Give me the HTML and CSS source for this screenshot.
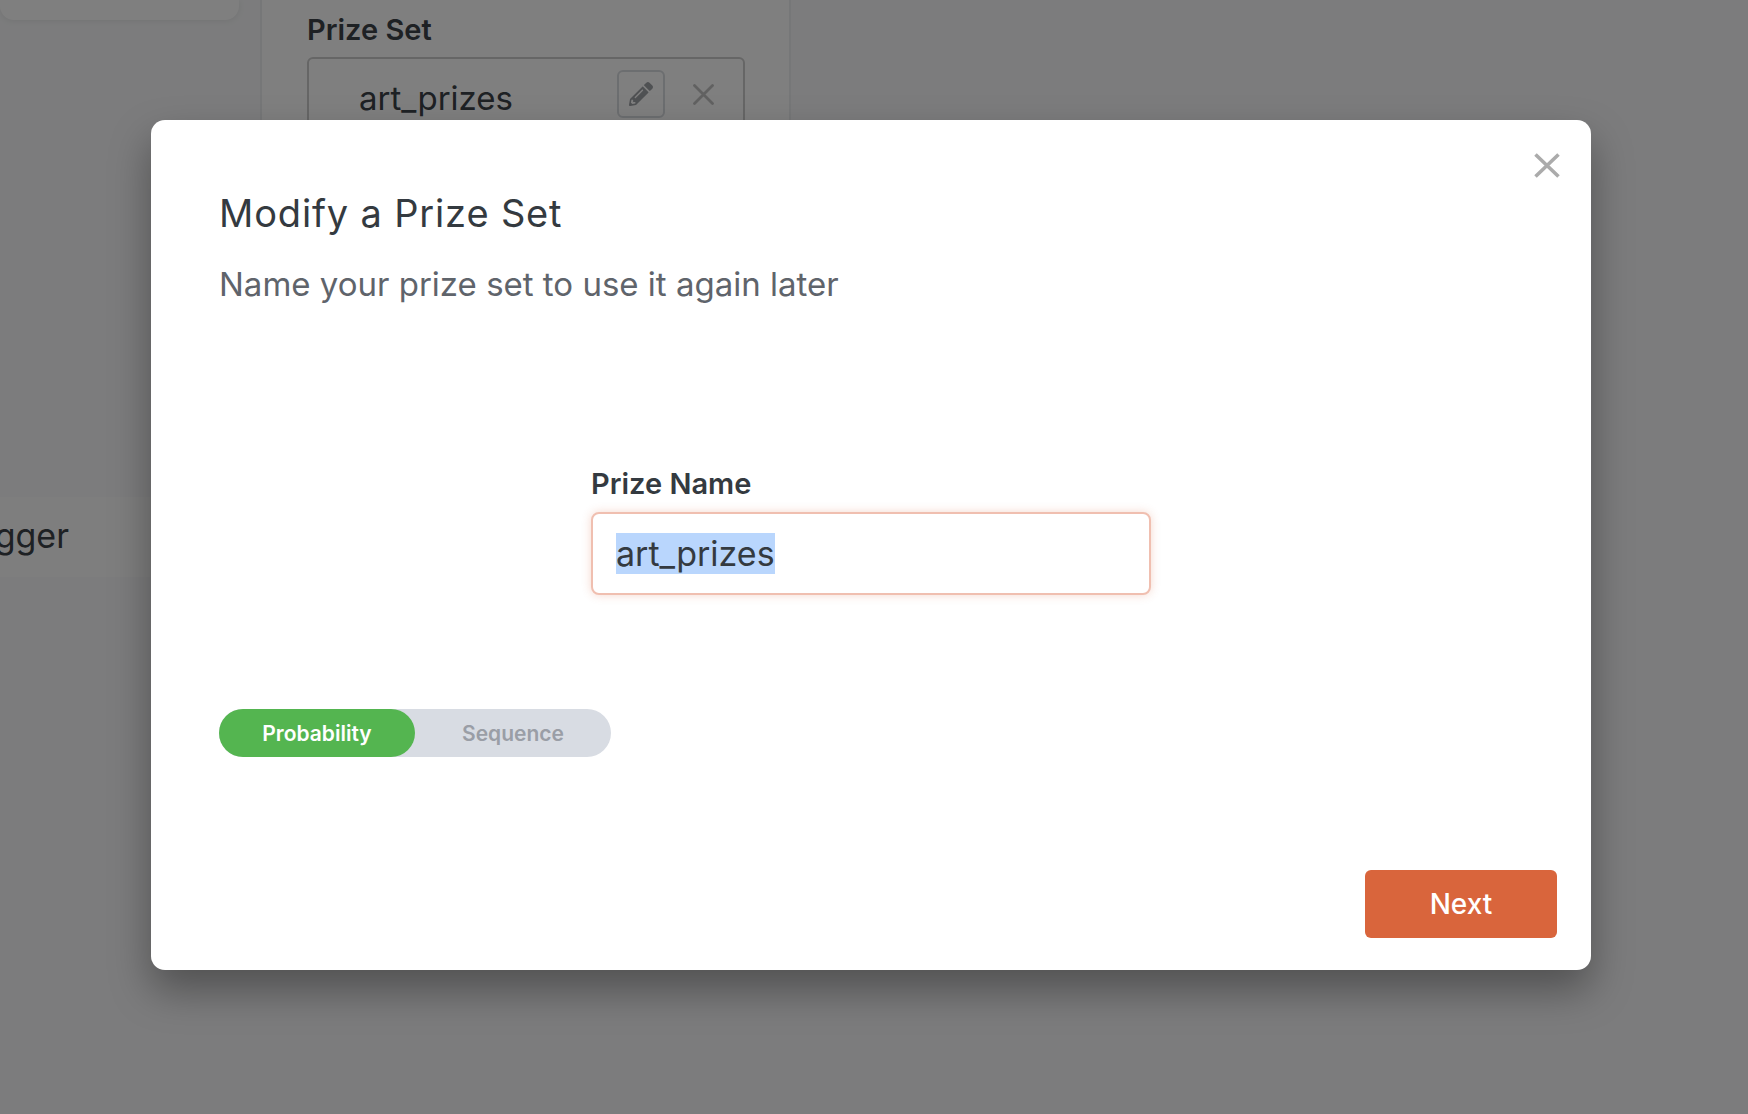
FILE: index.html
```html
<!DOCTYPE html>
<html lang="en">
<head>
<meta charset="utf-8">
<title>Modify a Prize Set</title>
<link rel="stylesheet" href="styles.css">
</head>
<body>
<div class="page">
  <aside class="side">
    <div class="side-card"></div>
    <div class="side-row"><span>Trigger</span></div>
  </aside>
  <section class="panel">
    <div class="panel-label">Prize Set</div>
    <div class="panel-field">
      <span class="panel-value">art_prizes</span>
      <button class="edit-btn" type="button" aria-label="Edit">
        <svg class="pencil" viewBox="0 0 512 512"><path d="M497.9 142.1l-46.1 46.1c-4.7 4.7-12.3 4.7-17 0l-111-111c-4.7-4.7-4.7-12.3 0-17l46.1-46.1c18.7-18.7 49.1-18.7 67.9 0l60.1 60.1c18.8 18.7 18.8 49.1 0 67.9zM284.2 99.8L21.6 362.4.4 483.9c-2.9 16.4 11.4 30.6 27.8 27.8l121.5-21.3 262.6-262.6c4.7-4.7 4.7-12.3 0-17l-111-111c-4.8-4.7-12.4-4.7-17.1 0zM124.1 339.9c-5.5-5.5-5.5-14.3 0-19.8l154-154c5.5-5.5 14.3-5.5 19.8 0s5.5 14.3 0 19.8l-154 154c-5.5 5.5-14.3 5.5-19.8 0zM88 424h48v36.3l-64.5 11.3-31.1-31.1L51.7 376H88v48z"/></svg>
      </button>
      <svg class="panel-x" viewBox="0 0 21 21"><path d="M1.5 1.5l18 18M19.5 1.5l-18 18"/></svg>
    </div>
  </section>
</div>
<div class="overlay"></div>
<div class="modal">
  <button class="close" type="button" aria-label="Close">
    <svg viewBox="0 0 26 25"><path d="M1.5 1.5l23 22M24.5 1.5l-23 22"/></svg>
  </button>
  <h2 class="title">Modify a Prize Set</h2>
  <p class="subtitle">Name your prize set to use it again later</p>
  <div class="form">
    <div class="form-label">Prize Name</div>
    <div class="form-input"><span class="selected">art_prizes</span></div>
  </div>
  <div class="toggle">
    <span class="toggle-opt on">Probability</span>
    <span class="toggle-opt">Sequence</span>
  </div>
  <div class="actions"><button class="next" type="button">Next</button></div>
</div>
</body>
</html>
```
FILE: styles.css
```css
* { box-sizing: border-box; }
html, body { margin: 0; height: 100%; }
body {
  position: relative;
  overflow: hidden;
  background: #f8f9fa;
  font-family: Inter, "Liberation Sans", sans-serif;
  color: #343a40;
}
.page { display: flex; align-items: flex-start; height: 100%; }
.side { width: 239px; flex: none; }
.side-card {
  height: 20px;
  background: #fff;
  border-radius: 0 0 14px 14px;
  box-shadow: 0 1px 6px rgba(0,0,0,.08);
}
.side-row {
  margin-top: 477px;
  height: 80px;
  background: #fdfdfd;
  display: flex;
  justify-content: flex-end;
  align-items: center;
  padding: 0 170px 4px 0;
  font-size: 34px;
  color: #3c4248;
  white-space: nowrap;
}
.panel {
  margin-left: 21px;
  width: 531px;
  height: 500px;
  flex: none;
  background: #fff;
  border: solid #eceef0;
  border-width: 0 2px;
  padding: 12px 45px 0;
}
.panel-label {
  font-size: 29px;
  line-height: 35px;
  font-weight: 600;
  color: #3c4248;
}
.panel-field {
  margin-top: 10px;
  width: 438px;
  height: 90px;
  border: 2px solid #ccc;
  border-radius: 6px;
  padding: 11px 0 0 50px;
  display: flex;
  align-items: flex-start;
}
.panel-value {
  margin-top: 9px;
  width: 258px;
  font-size: 33px;
  line-height: 39px;
  color: #3c4248;
}
.edit-btn {
  width: 48px;
  height: 48px;
  padding: 0;
  background: none;
  border: 2px solid #d8dce0;
  border-radius: 6px;
  display: flex;
  align-items: center;
  justify-content: center;
}
.pencil { width: 24px; height: 24px; fill: #9fa2a6; }
.panel-x {
  margin: 14px 0 0 28px;
  width: 21px;
  height: 21px;
  fill: none;
  stroke: #c2c2c2;
  stroke-width: 2.8;
  stroke-linecap: round;
}
.overlay {
  position: absolute;
  inset: 0;
  background: rgba(0,0,0,.5);
}
.modal {
  position: absolute;
  left: 151px;
  top: 120px;
  width: 1440px;
  height: 850px;
  background: #fff;
  border-radius: 14px;
  box-shadow: 0 20px 40px rgba(0,0,0,.35);
  padding: 70px 34px 32px 68px;
  display: flex;
  flex-direction: column;
}
.close {
  position: absolute;
  left: 1383px;
  top: 33px;
  width: 26px;
  height: 25px;
  padding: 0;
  background: none;
  border: 0;
}
.close svg {
  display: block;
  width: 26px;
  height: 25px;
  fill: none;
  stroke: #ababab;
  stroke-width: 3.6;
}
.title {
  margin: 0;
  font-size: 38px;
  line-height: 46px;
  font-weight: 400;
  letter-spacing: .022em;
  color: #343a40;
}
.subtitle {
  margin: 28px 0 0;
  font-size: 33px;
  line-height: 40px;
  color: #5f646b;
}
.form {
  margin: 162px 0 0 372px;
  width: 560px;
}
.form-label {
  font-size: 29px;
  line-height: 35px;
  font-weight: 600;
  color: #343a40;
}
.form-input {
  margin-top: 11px;
  height: 83px;
  border: 2px solid #f0bfb0;
  border-radius: 8px;
  padding-left: 23px;
  display: flex;
  align-items: center;
  background: #fff;
  box-shadow: 0 0 10px rgba(217,101,60,.25);
  font-size: 34px;
  color: #343a40;
}
.selected { background: #b9d6fd; }
.toggle {
  margin-top: 114px;
  width: 392px;
  height: 48px;
  border-radius: 24px;
  background: #d8dce3;
  display: flex;
}
.toggle-opt {
  width: 196px;
  border-radius: 24px;
  display: flex;
  align-items: center;
  justify-content: center;
  font-size: 21px;
  font-weight: 600;
  color: #9a9ea6;
}
.toggle-opt.on { background: #54b550; color: #fff; }
.actions {
  margin-top: auto;
  display: flex;
  justify-content: flex-end;
}
.next {
  width: 192px;
  height: 68px;
  border: 0;
  border-radius: 6px;
  background: #d9653c;
  color: #fff;
  font: 500 28px Inter, "Liberation Sans", sans-serif;
}
```
